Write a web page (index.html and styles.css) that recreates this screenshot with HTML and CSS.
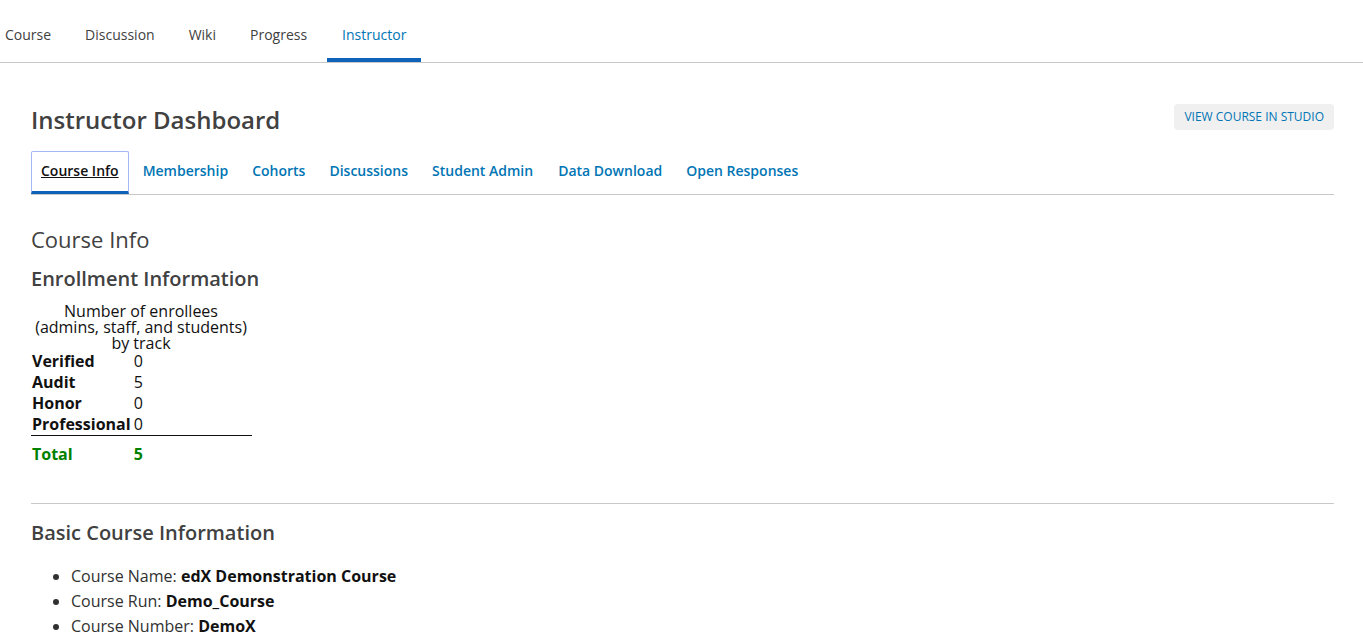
FILE: index.html
```html
<!DOCTYPE html>
<html lang="en">
<head>
  <meta charset="UTF-8">
  <title>Instructor Dashboard</title>
  <link rel="stylesheet" href="styles.css">
</head>
<body>

<nav class="course-tabs">
  <a href="#">Course</a>
  <a href="#">Discussion</a>
  <a href="#">Wiki</a>
  <a href="#">Progress</a>
  <a href="#" class="active">Instructor</a>
</nav>

<main class="dashboard">
  <div class="dash-header">
    <h1>Instructor Dashboard</h1>
    <a href="#" class="studio-btn">View Course in Studio</a>
  </div>

  <ul class="instructor-nav">
    <li><a href="#" class="active">Course Info</a></li>
    <li><a href="#">Membership</a></li>
    <li><a href="#">Cohorts</a></li>
    <li><a href="#">Discussions</a></li>
    <li><a href="#">Student Admin</a></li>
    <li><a href="#">Data Download</a></li>
    <li><a href="#">Open Responses</a></li>
  </ul>

  <section class="course-info">
    <h2>Course Info</h2>

    <div class="enrollment">
      <h3>Enrollment Information</h3>
      <table class="enrollment-table">
        <caption>Number of enrollees (admins, staff, and students) by track</caption>
        <tr><th>Verified</th><td>0</td></tr>
        <tr><th>Audit</th><td>5</td></tr>
        <tr><th>Honor</th><td>0</td></tr>
        <tr class="last"><th>Professional</th><td>0</td></tr>
        <tr class="total"><th>Total</th><td>5</td></tr>
      </table>
    </div>

    <div class="basic-info">
      <h3>Basic Course Information</h3>
      <ul>
        <li>Course Name: <b>edX Demonstration Course</b></li>
        <li>Course Run: <b>Demo_Course</b></li>
        <li>Course Number: <b>DemoX</b></li>
      </ul>
    </div>
  </section>
</main>

</body>
</html>
```

FILE: styles.css
```css
body {
  margin: 0;
  font-family: 'Open Sans', 'Noto Sans', sans-serif;
  color: #313131;
  background: #fff;
}

a {
  text-decoration: none;
}

.course-tabs {
  display: flex;
  gap: 4px;
  height: 62px;
  margin-left: -10px;
  border-bottom: 1px solid #c8c8c8;
}

.course-tabs a {
  display: flex;
  align-items: center;
  padding: 11px 15px 0;
  font-size: 14px;
  color: #414141;
  border-bottom: 4px solid transparent;
}

.course-tabs a:last-child {
  margin-left: 1px;
}

.course-tabs a.active {
  color: #0075b4;
  border-bottom-color: #0e62b7;
}

.dashboard {
  padding: 0 29px 0 31px;
}

.dash-header {
  display: flex;
  justify-content: space-between;
  align-items: flex-start;
  padding-top: 39px;
}

.dash-header h1 {
  margin: 0;
  font-size: 24px;
  font-weight: 600;
  color: #414141;
  line-height: 35px;
}

.studio-btn {
  margin-top: 2px;
  background: #f0f0f0;
  border-radius: 4px;
  padding: 0 10px;
  height: 26px;
  line-height: 26px;
  font-size: 12px;
  color: #0075b4;
  text-transform: uppercase;
}

.instructor-nav {
  list-style: none;
  display: flex;
  gap: 4px;
  margin: 14px 0 0;
  padding: 0;
  border-bottom: 1px solid #c8c8c8;
}

.instructor-nav a {
  display: block;
  padding: 9px 9px 11px;
  font-size: 14px;
  font-weight: 600;
  line-height: 19px;
  color: #0075b4;
  border: 1px solid transparent;
  border-bottom: 3px solid transparent;
  border-radius: 2px 2px 0 0;
}

.instructor-nav li:nth-child(6) a {
  margin-left: 1px;
}

.instructor-nav a.active {
  color: #111;
  text-decoration: underline;
  border-color: #a3b8f5;
  border-bottom-color: #0e62b7;
}

.course-info h2 {
  margin: 29px 0 0;
  font-size: 22px;
  font-weight: 400;
  color: #414141;
  line-height: 30px;
}

.course-info h3 {
  margin: 0;
  font-size: 20px;
  font-weight: 600;
  color: #414141;
  line-height: 28px;
}

.enrollment h3 {
  margin-top: 11px;
}

.enrollment-table {
  margin-top: 10px;
  border-collapse: collapse;
  font-size: 16px;
  color: #111;
}

.enrollment-table caption {
  line-height: 16px;
  width: 220px;
}

.enrollment-table th {
  text-align: left;
  font-weight: 700;
  padding: 0 1px;
  line-height: 21px;
}

.enrollment-table td {
  padding: 0 0 0 2px;
  width: 118px;
  line-height: 21px;
}

.enrollment-table tr.last th,
.enrollment-table tr.last td {
  border-bottom: 1px solid #111;
}

.enrollment-table tr.total th,
.enrollment-table tr.total td {
  color: #008100;
  font-weight: 700;
  padding-top: 8px;
}

.basic-info {
  margin-top: 38px;
  border-top: 1px solid #c8c8c8;
  padding-top: 15px;
}

.basic-info ul {
  margin: 17px 0 0;
  padding-left: 40px;
  font-size: 16px;
  line-height: 25px;
  color: #313131;
}

.basic-info b {
  font-weight: 700;
  color: #111;
}
```
